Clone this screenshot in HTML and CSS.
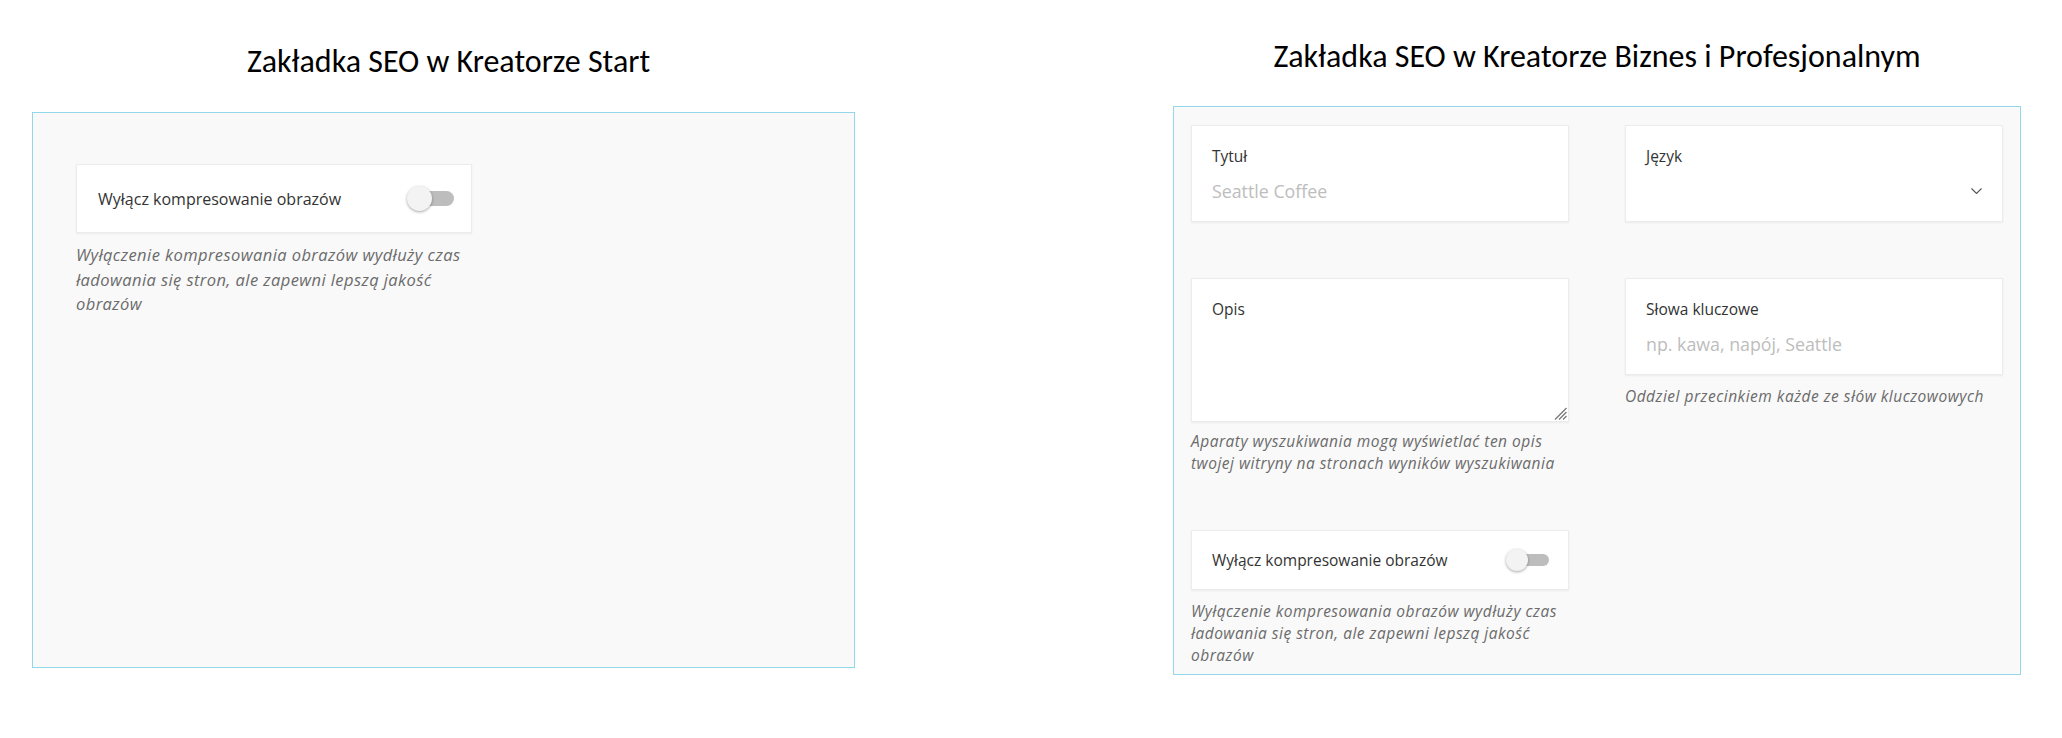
FILE: index.html
```html
<!DOCTYPE html>
<html lang="pl">
<head>
<meta charset="utf-8">
<title>Zakładka SEO</title>
<link rel="stylesheet" href="styles.css">
</head>
<body>
<div class="page">
  <section class="section section-start">
    <h1 class="title title-start">Zakładka SEO w Kreatorze Start</h1>
    <div class="panel panel-start">
      <div class="card card-toggle card-toggle-lg">
        <span class="label label-lg">Wyłącz kompresowanie obrazów</span>
        <span class="switch switch-lg"><span class="track"></span><span class="knob"></span></span>
      </div>
      <p class="help help-lg">Wyłączenie kompresowania obrazów wydłuży czas ładowania się stron, ale zapewni lepszą jakość obrazów</p>
    </div>
  </section>

  <section class="section section-biz">
    <h1 class="title title-biz">Zakładka SEO w Kreatorze Biznes i Profesjonalnym</h1>
    <div class="panel panel-biz">
      <div class="grid">
        <div class="field">
          <div class="card card-input">
            <div class="label">Tytuł</div>
            <div class="value placeholder">Seattle Coffee</div>
          </div>
        </div>
        <div class="field">
          <div class="card card-input">
            <div class="label">Język</div>
            <div class="value select">
              <span></span>
              <svg class="chevron" width="11" height="6" viewBox="0 0 11 6"><polyline points="0.5,0.5 5.5,5.5 10.5,0.5" fill="none" stroke="#555" stroke-width="1.1"/></svg>
            </div>
          </div>
        </div>
        <div class="field">
          <div class="card card-area">
            <div class="label">Opis</div>
            <svg class="grip" width="13" height="13" viewBox="0 0 13 13"><g stroke="#777" stroke-width="1.2"><line x1="12.5" y1="1" x2="1" y2="12.5"/><line x1="12.5" y1="5" x2="5" y2="12.5"/><line x1="12.5" y1="9" x2="9" y2="12.5"/></g></svg>
          </div>
          <p class="help help-tight">Aparaty wyszukiwania mogą wyświetlać ten opis twojej witryny na stronach wyników wyszukiwania</p>
        </div>
        <div class="field">
          <div class="card card-input">
            <div class="label">Słowa kluczowe</div>
            <div class="value placeholder">np. kawa, napój, Seattle</div>
          </div>
          <p class="help">Oddziel przecinkiem każde ze słów kluczowowych</p>
        </div>
        <div class="field">
          <div class="card card-toggle">
            <span class="label">Wyłącz kompresowanie obrazów</span>
            <span class="switch"><span class="track"></span><span class="knob"></span></span>
          </div>
          <p class="help">Wyłączenie kompresowania obrazów wydłuży czas ładowania się stron, ale zapewni lepszą jakość obrazów</p>
        </div>
      </div>
    </div>
  </section>
</div>
</body>
</html>
```

FILE: styles.css
```css
* { box-sizing: border-box; }

html, body {
  margin: 0;
  padding: 0;
  background: #ffffff;
}

body {
  font-family: "Open Sans", "Noto Sans", sans-serif;
  color: #333;
}

.page {
  display: flex;
  align-items: flex-start;
  padding-left: 32px;
  gap: 318px;
}

.section {
  display: flex;
  flex-direction: column;
}

.section-start { width: 823px; }
.section-biz { width: 848px; }

.title {
  margin: 0;
  font-family: Carlito, Calibri, "Open Sans", sans-serif;
  font-weight: normal;
  font-size: 32px;
  line-height: 36px;
  color: #000;
  text-align: center;
}

.title-start { margin-top: 44px; margin-bottom: 32px; padding-left: 10px; }
.title-biz { margin-top: 39px; margin-bottom: 31px; }

.panel {
  border: 1px solid #92d8ea;
  background: #f9f9f9;
}

.panel-start {
  height: 556px;
  padding: 51px 0 0 43px;
}

.panel-biz {
  height: 569px;
  padding: 18px 17px 0 17px;
}

.grid {
  display: grid;
  grid-template-columns: 378px 378px;
  column-gap: 56px;
  row-gap: 56px;
  align-items: start;
}

.card {
  background: #fff;
  border: 1px solid #ececec;
  box-shadow: 0 1px 2px rgba(0, 0, 0, 0.06);
}

.label {
  font-size: 15.5px;
  line-height: 20px;
  color: #333;
}

.card-input {
  height: 97px;
  padding: 20px 20px 0 20px;
}

.value {
  margin-top: 13px;
  height: 24px;
  font-size: 17.8px;
  line-height: 24px;
}

.placeholder { color: #bdbdbd; }

.select {
  display: flex;
  justify-content: space-between;
  align-items: center;
}

.chevron { display: block; }

.card-area {
  position: relative;
  height: 144px;
  padding: 20px 20px 0 20px;
}

.grip {
  position: absolute;
  right: 1px;
  bottom: 1px;
}

.card-toggle {
  height: 60px;
  display: flex;
  align-items: center;
  justify-content: space-between;
  padding: 0 19px 0 20px;
}

.switch {
  position: relative;
  width: 43px;
  height: 22px;
  display: block;
}

.track {
  position: absolute;
  right: 0;
  top: 5px;
  width: 36px;
  height: 12px;
  border-radius: 6px;
  background: #bdbdbd;
}

.knob {
  position: absolute;
  left: 0;
  top: 0;
  width: 22px;
  height: 22px;
  border-radius: 50%;
  background: #f3f3f3;
  box-shadow: 0 1px 3px rgba(0, 0, 0, 0.35);
}

.help {
  margin: 10px 0 0 0;
  font-size: 15.5px;
  letter-spacing: 0.5px;
  line-height: 22px;
  font-style: italic;
  color: #6b6b6b;
}

.help-tight {
  margin-top: 9px;
  line-height: 21.5px;
}

/* larger variant used in the "Start" panel */
.card-toggle-lg {
  width: 396px;
  height: 69px;
  padding: 0 17px 0 21px;
}

.label-lg { font-size: 16px; }

.switch-lg { width: 47px; height: 25px; }
.switch-lg .track { top: 5px; width: 40px; height: 15px; border-radius: 8px; }
.switch-lg .knob { width: 25px; height: 25px; }

.help-lg {
  width: 396px;
  margin-top: 10px;
  font-size: 16.5px;
  letter-spacing: 0.42px;
  line-height: 24.5px;
}
```
